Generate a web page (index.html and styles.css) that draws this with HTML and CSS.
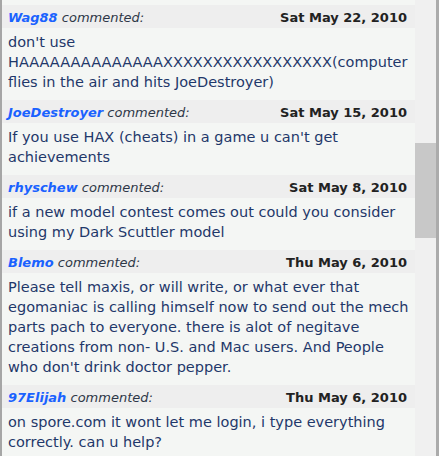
FILE: index.html
```html
<!DOCTYPE html>
<html>
<head>
<meta charset="utf-8">
<link rel="stylesheet" href="styles.css">
</head>
<body>
<div class="frame">
  <div class="edge"></div>
  <div class="comments">
    <div class="body tail"></div>

    <div class="comment">
      <div class="head">
        <span class="who"><a class="user">Wag88</a> <span class="verb">commented:</span></span>
        <span class="date">Sat May 22, 2010</span>
      </div>
      <div class="body">don't use HAAAAAAAAAAAAAAXXXXXXXXXXXXXXXXX(computer flies in the air and hits JoeDestroyer)</div>
    </div>

    <div class="comment">
      <div class="head">
        <span class="who"><a class="user">JoeDestroyer</a> <span class="verb">commented:</span></span>
        <span class="date">Sat May 15, 2010</span>
      </div>
      <div class="body">If you use HAX (cheats) in a game u can't get achievements</div>
    </div>

    <div class="comment">
      <div class="head">
        <span class="who"><a class="user">rhyschew</a> <span class="verb">commented:</span></span>
        <span class="date">Sat May 8, 2010</span>
      </div>
      <div class="body">if a new model contest comes out could you consider using my Dark Scuttler model</div>
    </div>

    <div class="comment">
      <div class="head">
        <span class="who"><a class="user">Blemo</a> <span class="verb">commented:</span></span>
        <span class="date">Thu May 6, 2010</span>
      </div>
      <div class="body">Please tell maxis, or will write, or what ever that egomaniac is calling himself now to send out the mech parts pach to everyone. there is alot of negitave creations from non- U.S. and Mac users. And People who don't drink doctor pepper.</div>
    </div>

    <div class="comment">
      <div class="head">
        <span class="who"><a class="user">97Elijah</a> <span class="verb">commented:</span></span>
        <span class="date">Thu May 6, 2010</span>
      </div>
      <div class="body">on spore.com it wont let me login, i type everything correctly. can u help?</div>
    </div>
  </div>
  <div class="scrollbar">
    <div class="thumb"></div>
  </div>
  <div class="rim"></div>
</div>
</body>
</html>
```

FILE: styles.css
```css
html, body {
  margin: 0;
  padding: 0;
  height: 100%;
  overflow: hidden;
  background: #f4f6f4;
}

.frame {
  display: flex;
  height: 456px;
  font-family: "DejaVu Sans", Verdana, sans-serif;
}

.edge {
  width: 2px;
  flex: none;
  background: #a6a6a6;
}

.comments {
  flex: 1;
  min-width: 0;
  overflow: hidden;
  background: #f4f6f4;
}

.head {
  display: flex;
  justify-content: space-between;
  align-items: baseline;
  background: #eeeeee;
  padding: 2px 8px 0 6px;
  line-height: 21px;
  font-size: 13px;
  white-space: nowrap;
}

.user {
  color: #1a62ff;
  font-weight: bold;
  font-style: italic;
  text-decoration: none;
}

.verb {
  color: #2e3848;
  font-style: italic;
}

.date {
  color: #222222;
  font-weight: bold;
}

.body {
  background: #f4f6f4;
  color: #1f386a;
  font-size: 14.5px;
  line-height: 20px;
  padding: 4px 2px 8px 6px;
}

.body.tail {
  height: 5px;
  padding: 0;
}

.scrollbar {
  width: 21px;
  flex: none;
  background: #f0f0f0;
}

.thumb {
  margin-top: 143px;
  height: 95px;
  background: #c8c8c8;
}

.rim {
  width: 3px;
  flex: none;
  background: #ababab;
}
```
